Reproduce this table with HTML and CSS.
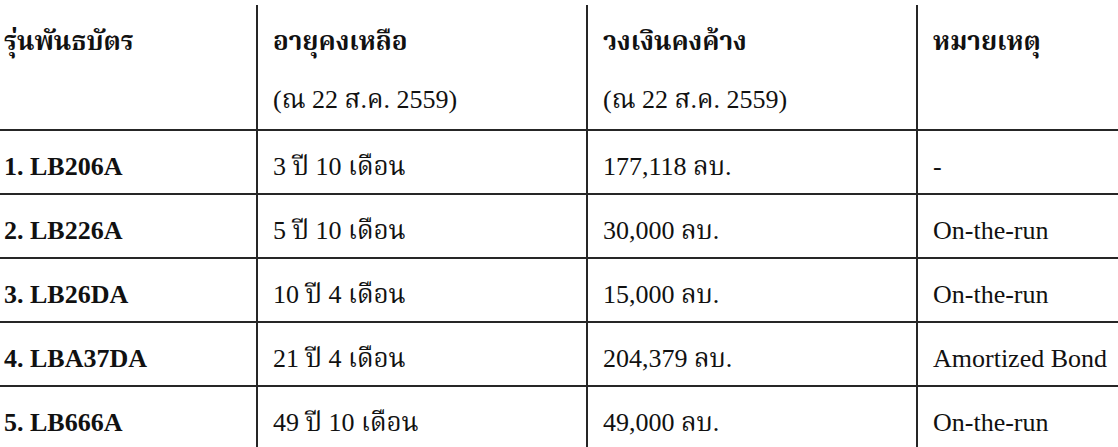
FILE: index.html
```html
<!DOCTYPE html>
<html lang="th">
<head>
<meta charset="utf-8">
<title>รุ่นพันธบัตร</title>
<link rel="stylesheet" href="styles.css">
</head>
<body>
<table class="bonds">
  <colgroup>
    <col class="c1"><col class="c2"><col class="c3"><col class="c4">
  </colgroup>
  <thead>
    <tr>
      <th><div class="h1">รุ่นพันธบัตร</div><div class="h2">&nbsp;</div></th>
      <th><div class="h1">อายุคงเหลือ</div><div class="h2">(ณ 22 ส.ค. 2559)</div></th>
      <th><div class="h1">วงเงินคงค้าง</div><div class="h2">(ณ 22 ส.ค. 2559)</div></th>
      <th><div class="h1">หมายเหตุ</div><div class="h2">&nbsp;</div></th>
    </tr>
  </thead>
  <tbody>
    <tr><td class="name">1. LB206A</td><td>3 ปี 10 เดือน</td><td>177,118 ลบ.</td><td>-</td></tr>
    <tr><td class="name">2. LB226A</td><td>5 ปี 10 เดือน</td><td>30,000 ลบ.</td><td>On-the-run</td></tr>
    <tr><td class="name">3. LB26DA</td><td>10 ปี 4 เดือน</td><td>15,000 ลบ.</td><td>On-the-run</td></tr>
    <tr><td class="name">4. LBA37DA</td><td>21 ปี 4 เดือน</td><td>204,379 ลบ.</td><td>Amortized Bond</td></tr>
    <tr><td class="name">5. LB666A</td><td>49 ปี 10 เดือน</td><td>49,000 ลบ.</td><td>On-the-run</td></tr>
  </tbody>
</table>
</body>
</html>
```
FILE: styles.css
```css
html, body {
  margin: 0;
  padding: 0;
  background: #ffffff;
  overflow: hidden;
}
body {
  width: 1118px;
  height: 447px;
}
.bonds {
  margin-top: 5px;
  border-collapse: collapse;
  table-layout: fixed;
  width: 1118px;
  font-family: "Liberation Serif", "Times New Roman", "Norasi", "Noto Serif Thai", serif;
  font-size: 26px;
  color: #111111;
}
.c1 { width: 257px; }
.c2 { width: 330px; }
.c3 { width: 330px; }
.c4 { width: 201px; }
.bonds th, .bonds td {
  border-left: 2px solid #262626;
  border-right: 2px solid #262626;
  border-bottom: 2px solid #262626;
  padding: 0 0 0 15px;
  text-align: left;
  vertical-align: top;
  white-space: nowrap;
  overflow: hidden;
}
.bonds th:first-child, .bonds td:first-child {
  border-left: none;
  padding-left: 4px;
}
.bonds th:last-child, .bonds td:last-child {
  border-right: none;
}
.bonds th {
  font-weight: bold;
  padding-top: 8px;
  height: 116px;
}
.h1 {
  line-height: 58px;
  height: 58px;
}
.h2 {
  font-weight: normal;
  line-height: 58px;
  height: 58px;
}
.bonds td {
  height: 41px;
  padding-top: 21px;
  line-height: 30px;
  vertical-align: baseline;
  font-weight: normal;
}
.bonds td.name {
  font-weight: bold;
}
```
